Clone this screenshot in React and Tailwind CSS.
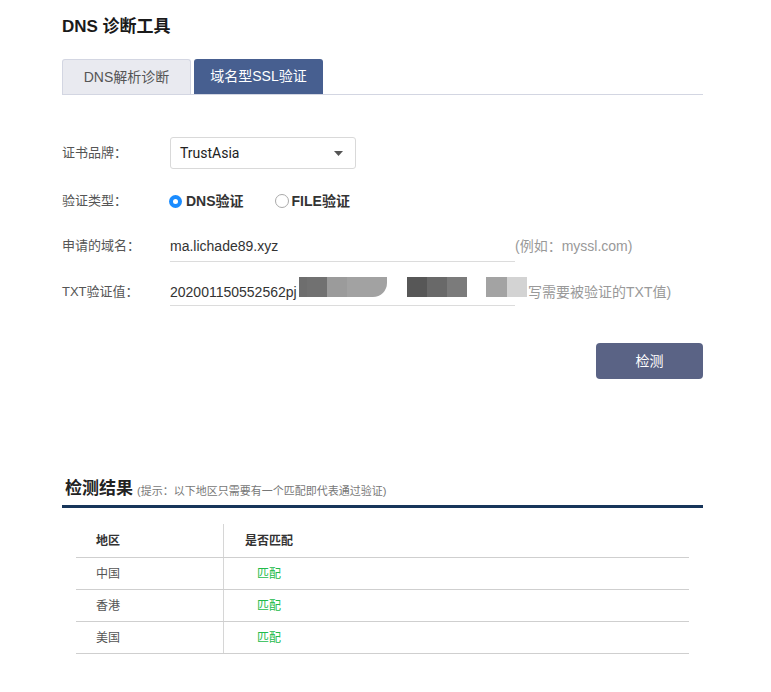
export default function App() {
  const rows = ["中国", "香港", "美国"];
  const wave = [
    ["w-[8px]", "bg-[#6e6e6e]"],
    ["w-[20px]", "bg-[#717171]"],
    ["w-[20px]", "bg-[#9b9b9b]"],
    ["w-[40px]", "bg-[#a2a2a2]"],
  ];
  const blocks = [
    ["w-[20px]", "bg-transparent"],
    ["w-[20px]", "bg-[#575757]"],
    ["w-[20px]", "bg-[#696969]"],
    ["w-[20px]", "bg-[#7b7b7b]"],
    ["w-[19px]", "bg-transparent"],
    ["w-[21px]", "bg-[#a3a3a3]"],
    ["w-[20px]", "bg-[#d3d3d3]"],
  ];

  return (
    <div className="min-h-[692px] w-[771px] bg-white font-['Liberation_Sans','Noto_Sans_CJK_SC',sans-serif] text-[#333]">
      <div className="pl-[62px] pr-[68px] pt-[16px]">
        <h1 className="text-[17px] font-bold leading-[21px] text-[#1a1a1a]">DNS 诊断工具</h1>

        <div className="mt-[22px] flex gap-[3px] border-b border-[#d3d6e2]">
          <div className="flex h-[35px] w-[129px] items-center justify-center rounded-t-[3px] border border-b-0 border-[#d3d6e2] bg-[#e9eaf0] text-[14px] text-[#555]">
            DNS解析诊断
          </div>
          <div className="flex h-[35px] w-[129px] items-center justify-center rounded-t-[3px] bg-[#475f90] text-[14px] text-white">
            域名型SSL验证
          </div>
        </div>

        <div className="mt-[42px] flex flex-col">
          <div className="flex h-[32px] items-center">
            <div className="w-[108px] text-[13px] text-[#555]">证书品牌：</div>
            <div className="flex h-[32px] w-[186px] items-center justify-between rounded-[3px] border border-[#d9d9d9] pl-[9px] pr-[12px] font-['Roboto',sans-serif] text-[14px] text-[#222]">
              <span>TrustAsia</span>
              <svg width="9" height="5" viewBox="0 0 9 5">
                <path d="M0 0 L9 0 L4.5 5 Z" fill="#555" />
              </svg>
            </div>
          </div>

          <div className="mt-[16px] flex h-[32px] items-center">
            <div className="w-[107px] text-[13px] text-[#555]">验证类型：</div>
            <div className="flex items-center">
              <span className="flex h-[13px] w-[13px] items-center justify-center rounded-full bg-[#1a8cff]">
                <span className="h-[5px] w-[5px] rounded-full bg-white" />
              </span>
              <span className="ml-[4px] text-[14px] font-bold text-[#333]">DNS验证</span>
            </div>
            <div className="ml-[31px] flex items-center">
              <span className="h-[14px] w-[14px] rounded-full border border-[#aaa] bg-white" />
              <span className="ml-[3px] text-[14px] font-bold text-[#333]">FILE验证</span>
            </div>
          </div>

          <div className="mt-[12px] flex items-start">
            <div className="w-[108px] pt-[7px] text-[13px] text-[#555]">申请的域名：</div>
            <div className="h-[33px] w-[345px] border-b border-[#dcdcdc] pt-[7px] text-[14px] text-[#333]">ma.lichade89.xyz</div>
            <div className="pt-[7px] text-[14px] text-[#999]">(例如：myssl.com)</div>
          </div>

          <div className="mt-[13px] flex items-start">
            <div className="w-[108px] pt-[7px] text-[13px] text-[#555]">TXT验证值：</div>
            <div className="relative h-[31px] w-[345px] border-b border-[#dcdcdc] pt-[7px] text-[14px] text-[#333]">
              202001150552562pj
              <div className="absolute left-[129px] top-[2px] flex h-[20px]">
                <div className="flex h-full overflow-hidden rounded-br-[14px]">
                  {wave.map(([w, c], i) => (
                    <div key={i} className={`h-full ${w} ${c}`} />
                  ))}
                </div>
                {blocks.map(([w, c], i) => (
                  <div key={i} className={`h-full ${w} ${c}`} />
                ))}
              </div>
            </div>
            <div className="pt-[7px] text-[14px] text-[#999]">
              <span className="ml-[13px]">写需要被验证的TXT值)</span>
            </div>
          </div>

          <div className="mt-[37px] flex justify-end">
            <button className="h-[36px] w-[107px] rounded-[4px] bg-[#5a6385] text-[14px] text-white">检测</button>
          </div>
        </div>

        <div className="mt-[99px] flex items-end border-b-[3px] border-[#17355a] pb-[5px] pl-[3px]">
          <span className="text-[17px] font-bold leading-[22px] text-[#222]">检测结果</span>
          <span className="ml-[4px] pb-[1px] text-[11px] text-[#777]">(提示：以下地区只需要有一个匹配即代表通过验证)</span>
        </div>

        <div className="mt-[16px] px-[14px]">
          <div className="flex h-[34px] items-center border-b border-[#cfcfcf] text-[12px] font-bold text-[#333]">
            <div className="flex h-full w-[148px] items-center border-r border-[#d6d6d6] pl-[20px]">地区</div>
            <div className="pl-[21px]">是否匹配</div>
          </div>
          {rows.map((r) => (
            <div key={r} className="flex h-[32px] items-center border-b border-[#cfcfcf] text-[12px]">
              <div className="flex h-full w-[148px] items-center border-r border-[#d6d6d6] pl-[20px] text-[#555]">{r}</div>
              <div className="pl-[33px] text-[#22bb4a]">匹配</div>
            </div>
          ))}
        </div>
      </div>
    </div>
  );
}
